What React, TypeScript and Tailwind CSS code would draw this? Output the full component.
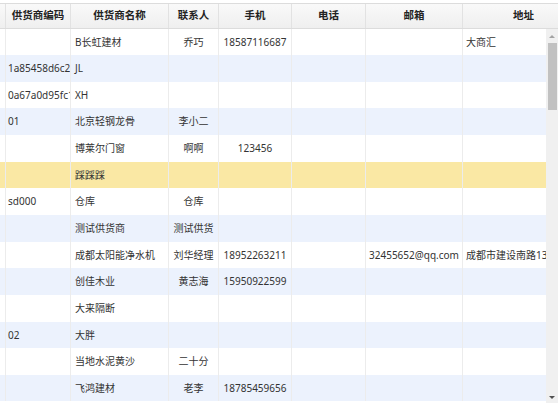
import React from "react";

const W = ["w-[6px]", "w-[65px]", "w-[98px]", "w-[50px]", "w-[73px]", "w-[74px]", "w-[97px]", "w-[122px]"];

type Row = [string, string, string, string, string, string, string];

const rows: Row[] = [
  ["", "B长虹建材", "乔巧", "18587116687", "", "", "大商汇"],
  ["1a85458d6c2a", "JL", "", "", "", "", ""],
  ["0a67a0d95fc1", "XH", "", "", "", "", ""],
  ["01", "北京轻钢龙骨", "李小二", "", "", "", ""],
  ["", "博莱尔门窗", "啊啊", "123456", "", "", ""],
  ["", "踩踩踩", "", "", "", "", ""],
  ["sd000", "仓库", "仓库", "", "", "", ""],
  ["", "测试供货商", "测试供货", "", "", "", ""],
  ["", "成都太阳能净水机", "刘华经理", "18952263211", "", "32455652@qq.com", "成都市建设南路13号"],
  ["", "创佳木业", "黄志海", "15950922599", "", "", ""],
  ["", "大来隔断", "", "", "", "", ""],
  ["02", "大胖", "", "", "", "", ""],
  ["", "当地水泥黄沙", "二十分", "", "", "", ""],
  ["", "飞鸿建材", "老李", "18785459656", "", "", ""],
];

const heights = [26, 27, 26, 27, 27, 26, 27, 27, 26, 27, 27, 26, 27, 26];

const headers = ["", "供货商编码", "供货商名称", "联系人", "手机", "电话", "邮箱", "地址"];

const align = [
  "justify-start pl-[2px]",
  "justify-start pl-[4px]",
  "justify-center",
  "justify-center",
  "justify-center",
  "justify-start pl-[3px]",
  "justify-start pl-[3px]",
];

export default function App() {
  return (
    <div
      className="w-[558px] h-[403px] bg-white overflow-hidden pt-[3px] flex flex-col"
      style={{ fontFamily: '"Noto Sans", "Noto Sans CJK SC", sans-serif' }}
    >
      {/* header */}
      <div className="flex h-[26px] shrink-0 box-border border-y border-[#dcdcdc] bg-gradient-to-b from-[#f9f9f9] to-[#efefef] overflow-hidden">
        {headers.map((h, i) => (
          <div
            key={i}
            className={`${W[i]} shrink-0 h-full flex items-center justify-center border-r border-[#e2e2e2] text-[10.5px] font-bold text-[#222] whitespace-nowrap`}
          >
            {h}
          </div>
        ))}
      </div>
      {/* body */}
      <div className="flex flex-1 min-h-0">
        <div className="w-[546px] overflow-hidden">
          {rows.map((r, ri) => {
            const bg = ri === 5 ? "bg-[#fae8a4]" : ri % 2 === 1 ? "bg-[#ecf2fd]" : "bg-white";
            return (
              <div key={ri} className={`flex ${heights[ri] === 26 ? "h-[26px]" : "h-[27px]"} ${bg}`}>
                <div className={`${W[0]} shrink-0 h-full border-r border-[#ececec]`} />
                {r.map((c, ci) => (
                  <div
                    key={ci}
                    className={`${W[ci + 1]} shrink-0 h-full flex items-center ${align[ci]} border-r border-[#ececec] text-[10px] text-[#333] whitespace-nowrap overflow-hidden`}
                  >
                    {c}
                  </div>
                ))}
              </div>
            );
          })}
        </div>
        {/* scrollbar */}
        <div className="w-[12px] bg-[#f0f0f0] flex flex-col items-center">
          <div className="h-[14px] flex items-center justify-center">
            <div className="w-0 h-0 border-x-[3px] border-x-transparent border-b-[3px] border-b-[#a3a3a3]" />
          </div>
          <div className="w-[9px] h-[67px] bg-[#c1c1c1]" />
          <div className="flex-1" />
          <div className="h-[12px] flex items-center justify-center">
            <div className="w-0 h-0 border-x-[3px] border-x-transparent border-t-[3px] border-t-[#505050]" />
          </div>
        </div>
      </div>
    </div>
  );
}
